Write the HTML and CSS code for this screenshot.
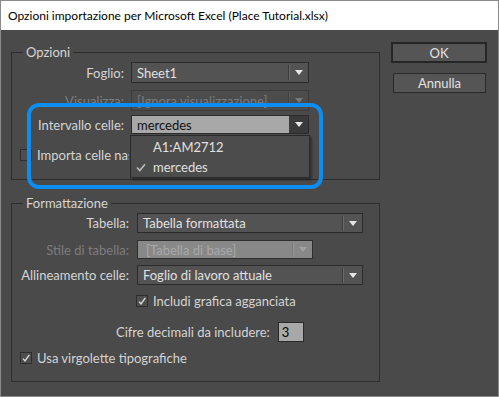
FILE: index.html
```html
<!DOCTYPE html>
<html lang="it">
<head>
<meta charset="utf-8">
<title>Opzioni importazione</title>
<link rel="stylesheet" href="styles.css">
</head>
<body>
<div class="window">
  <div class="titlebar">Opzioni importazione per Microsoft Excel (Place Tutorial.xlsx)</div>
  <div class="content">
    <div class="left">
      <fieldset class="group group-opzioni">
        <legend>Opzioni</legend>
        <div class="form form-a">
          <label class="lbl">Foglio:</label>
          <div class="select">
            <span class="value">Sheet1</span>
            <span class="sep"></span>
            <span class="arrow"></span>
          </div>
        </div>
        <div class="form form-a row-vis">
          <label class="lbl disabled">Visualizza:</label>
          <div class="select select-disabled">
            <span class="value">[Ignora visualizzazione]</span>
            <span class="sep"></span>
            <span class="arrow"></span>
          </div>
        </div>
        <div class="form form-a row-int">
          <label class="lbl">Intervallo celle:</label>
          <div class="select select-open">
            <span class="value">mercedes</span>
            <span class="arrowbox"><span class="arrow"></span></span>
            <div class="menu">
              <div class="menu-item"><span class="tick"></span>A1:AM2712</div>
              <div class="menu-item"><span class="tick">
                <svg width="10" height="9" viewBox="0 0 10 9"><path d="M1 4.5 L3.8 7.5 L9 1.2" fill="none" stroke="#bdbdbd" stroke-width="1.6"/></svg>
              </span>mercedes</div>
            </div>
          </div>
        </div>
        <div class="check-row check-importa">
          <span class="checkbox"></span>
          <span class="check-text clipped">Importa celle nascoste non salvate nella vista</span>
        </div>
      </fieldset>

      <fieldset class="group group-format">
        <legend>Formattazione</legend>
        <div class="form form-b">
          <label class="lbl">Tabella:</label>
          <div class="select select-wide">
            <span class="value">Tabella formattata</span>
            <span class="sep"></span>
            <span class="arrow"></span>
          </div>
        </div>
        <div class="form form-b row-stile">
          <label class="lbl disabled">Stile di tabella:</label>
          <div class="select select-grey">
            <span class="value">[Tabella di base]</span>
            <span class="sep"></span>
            <span class="arrow"></span>
          </div>
        </div>
        <div class="form form-b row-alli">
          <label class="lbl">Allineamento celle:</label>
          <div class="select select-wide">
            <span class="value">Foglio di lavoro attuale</span>
            <span class="sep"></span>
            <span class="arrow"></span>
          </div>
        </div>
        <div class="check-row check-includi">
          <span class="checkbox checked">
            <svg width="11" height="11" viewBox="0 0 11 11"><path d="M2.2 5.6 L4.4 8.2 L9.2 1.6" fill="none" stroke="#dedede" stroke-width="1.5"/></svg>
          </span>
          <span class="check-text">Includi grafica agganciata</span>
        </div>
        <div class="decimal-row">
          <label class="lbl">Cifre decimali da includere:</label>
          <span class="num">3</span>
        </div>
        <div class="check-row check-usa">
          <span class="checkbox checked">
            <svg width="11" height="11" viewBox="0 0 11 11"><path d="M2.2 5.6 L4.4 8.2 L9.2 1.6" fill="none" stroke="#dedede" stroke-width="1.5"/></svg>
          </span>
          <span class="check-text">Usa virgolette tipografiche</span>
        </div>
      </fieldset>
    </div>
    <div class="right">
      <button class="btn btn-default">OK</button>
      <button class="btn">Annulla</button>
    </div>
  </div>
  <div class="highlight"></div>
</div>
</body>
</html>
```

FILE: styles.css
```css
* { box-sizing: border-box; }
html, body { margin: 0; padding: 0; }
body {
  font-family: "Lato", "Liberation Sans", sans-serif;
  font-size: 12px;
  background: #4a4a4a;
}
.window {
  position: relative;
  width: 499px;
  height: 397px;
  border: 1px solid #8a8a8a;
  display: flex;
  flex-direction: column;
  background: #4a4a4a;
}
.titlebar {
  height: 29px;
  background: #ffffff;
  color: #000;
  padding-left: 7px;
  display: flex;
  align-items: center;
  font-size: 12px;
}
.content {
  flex: 1;
  display: flex;
  padding: 0 0 0 10px;
  color: #d4d4d4;
  font-size: 13px;
}
.left {
  width: 369px;
  display: flex;
  flex-direction: column;
}
.group {
  margin: 0;
  padding: 0;
  border: 1px solid #2e2e2e;
  min-width: 0;
  position: relative;
}
.group legend {
  margin-left: 11px;
  padding: 0 3px;
  line-height: 16px;
  height: 16px;
  color: #d4d4d4;
}
.group-opzioni {
  margin-top: 14px;
  height: 136px;
}
.group-format {
  margin-top: 15px;
  height: 187px;
}
.form {
  display: grid;
  align-items: center;
}
.form-a {
  grid-template-columns: 112px 178px;
  column-gap: 7px;
  margin-top: 2px;
}
.row-vis { margin-top: 7px; }
.row-int { margin-top: 4px; }
.form-b {
  grid-template-columns: 117px auto;
  column-gap: 8px;
  margin-top: 2px;
  justify-items: start;
}
.row-stile { margin-top: 7px; }
.row-alli { margin-top: 6px; }
.lbl {
  text-align: right;
  white-space: nowrap;
  justify-self: end;
}
.lbl.disabled { color: #7d7d7d; }
.select {
  position: relative;
  height: 21px;
  border: 1px solid #2b2b2b;
  background: #535353;
  display: flex;
  align-items: center;
  color: #e0e0e0;
}
.select .value {
  flex: 1;
  padding-left: 5px;
  white-space: nowrap;
  overflow: hidden;
}
.select .sep {
  width: 2px;
  height: 15px;
  border-left: 1px solid #3a3a3a;
  border-right: 1px solid #6a6a6a;
  margin-right: 5px;
}
.arrow {
  width: 0;
  height: 0;
  border-left: 4px solid transparent;
  border-right: 4px solid transparent;
  border-top: 5px solid #e6e6e6;
  margin-right: 5px;
}
.select-disabled {
  background: #4c4c4c;
  border-color: #3c3c3c;
  color: #7a7a7a;
}
.select-disabled .arrow { border-top-color: #7a7a7a; }
.select-disabled .sep { border-left-color: #404040; border-right-color: #5a5a5a; }
.select-open {
  height: 19px;
  background: #a8a8a8;
  color: #111;
  border-color: #2b2b2b;
}
.arrowbox {
  width: 19px;
  height: 100%;
  background: #3a3a3a;
  display: flex;
  align-items: center;
  justify-content: center;
}
.arrowbox .arrow { margin: 0; }
.menu {
  position: absolute;
  left: -2px;
  top: 19px;
  width: 180px;
  height: 43px;
  background: #4c4c4c;
  border: 1px solid #2a2a2a;
  box-shadow: 2px 2px 2px rgba(0,0,0,0.35);
  padding-top: 1px;
  color: #e0e0e0;
  z-index: 2;
}
.menu-item {
  height: 20px;
  display: flex;
  align-items: center;
}
.tick {
  width: 22px;
  padding-left: 5px;
  display: flex;
  align-items: center;
}
.select-wide { width: 226px; height: 20px; }
.select-grey {
  width: 176px;
  height: 19px;
  background: #888888;
  border-color: #2e2e2e;
  color: #a9a9a9;
}
.select-grey .value { padding-left: 8px; }
.select-grey .sep { border-left-color: #7a7a7a; border-right-color: #959595; }
.select-grey .arrow { border-top-color: #a0a0a0; }
.check-row {
  display: flex;
  align-items: center;
  white-space: nowrap;
  height: 16px;
}
.checkbox {
  width: 12px;
  height: 12px;
  border: 1px solid #2e2e2e;
  background: #4e4e4e;
  display: inline-flex;
  align-items: center;
  justify-content: center;
  margin-right: 5px;
  flex: none;
}
.checkbox svg { display: block; }
.clipped {
  width: 92px;
  overflow: hidden;
}
.check-importa {
  margin-top: 13px;
  padding-left: 8px;
}
.check-includi {
  margin-top: 8px;
  padding-left: 124px;
}
.decimal-row {
  margin-top: 13px;
  display: flex;
  align-items: center;
  padding-left: 104px;
}
.decimal-row .lbl { margin-right: 8px; }
.num {
  width: 26px;
  height: 20px;
  background: #a8a8a8;
  border: 1px solid #2a2a2a;
  color: #000;
  padding-left: 3px;
  line-height: 18px;
}
.check-usa {
  margin-top: 8px;
  padding-left: 8px;
}
.right {
  margin-left: 11px;
  padding-top: 12px;
  display: flex;
  flex-direction: column;
  align-items: flex-start;
}
.btn {
  font-family: inherit;
  font-size: 13px;
  color: #e2e2e2;
  background: #555555;
  border: 1px solid #2a2a2a;
  width: 93px;
  height: 20px;
  padding: 0;
  margin-left: 2px;
  line-height: 16px;
}
.btn-default {
  width: 96px;
  height: 21px;
  border: 2px solid #262626;
  margin-left: 0;
  margin-bottom: 10px;
}
.highlight {
  position: absolute;
  left: 26px;
  top: 102px;
  width: 296px;
  height: 86px;
  border: 4px solid #0b8df2;
  border-radius: 12px;
  pointer-events: none;
  z-index: 3;
}
```
